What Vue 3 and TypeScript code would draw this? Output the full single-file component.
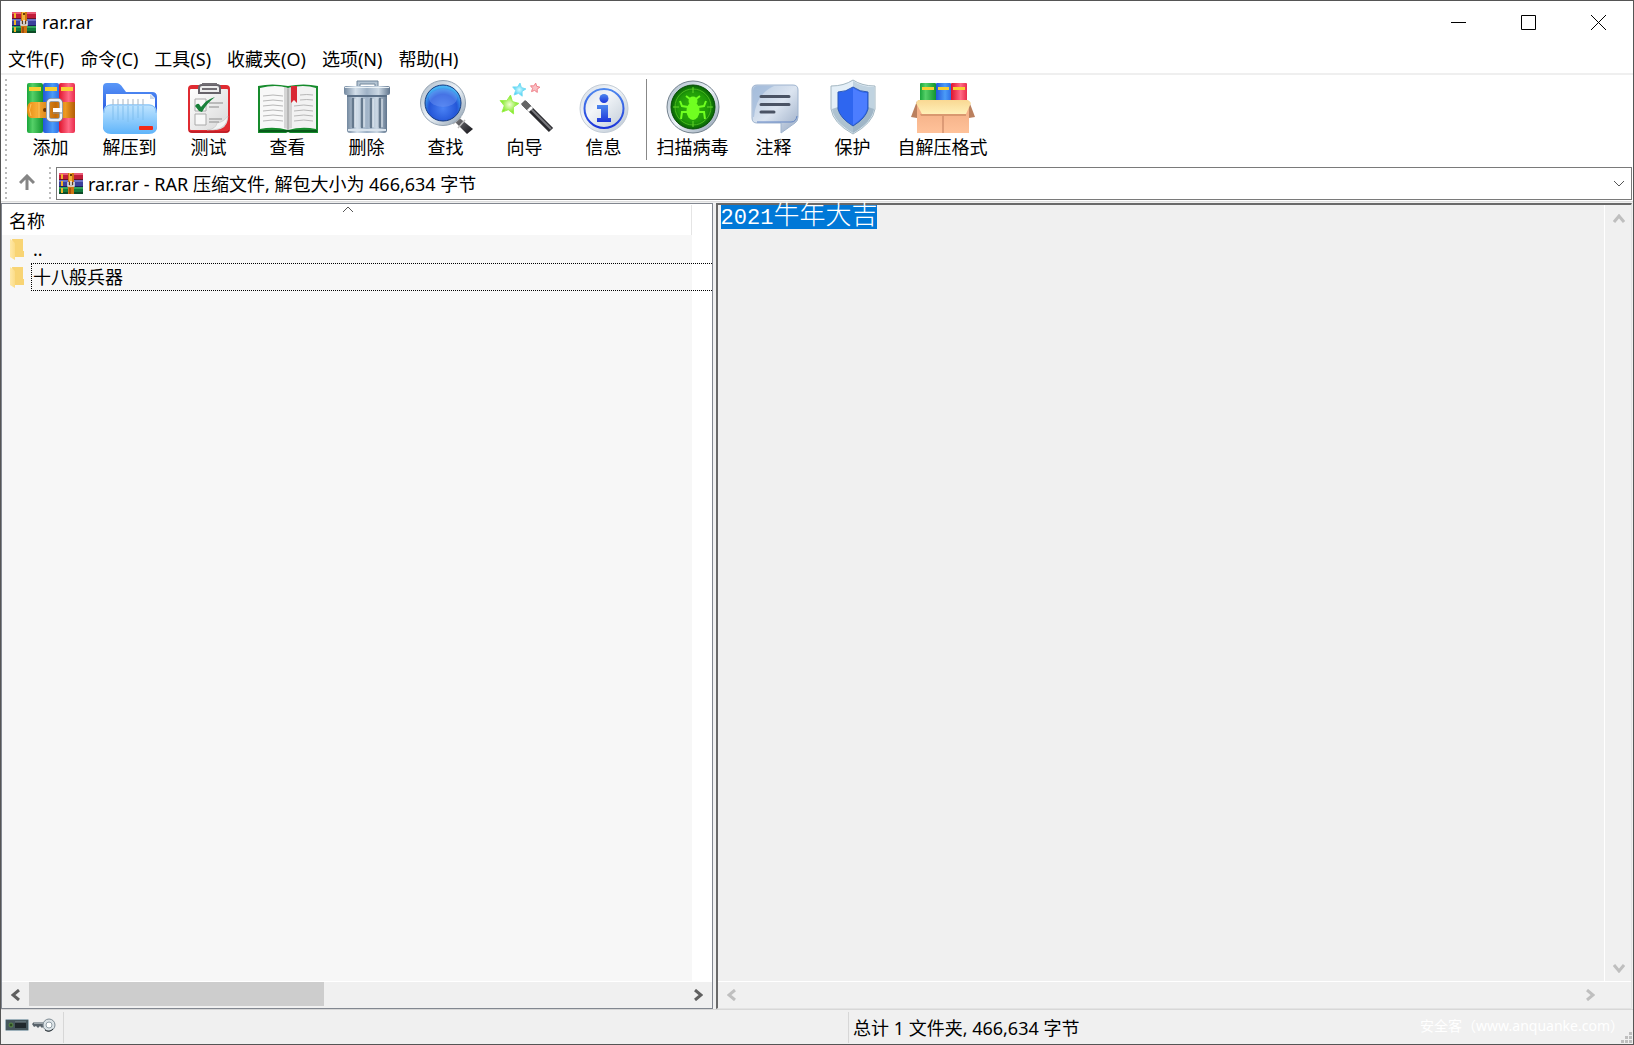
<script setup lang="ts">
import { ref } from 'vue'

interface Tool {
  id: string
  label: string
  wide?: 'scan' | 'sfx'
}

const menus: string[] = ['文件(F)', '命令(C)', '工具(S)', '收藏夹(O)', '选项(N)', '帮助(H)']

const archiveTools: Tool[] = [
  { id: 'add', label: '添加' },
  { id: 'extract', label: '解压到' },
  { id: 'test', label: '测试' },
  { id: 'view', label: '查看' },
  { id: 'delete', label: '删除' },
  { id: 'find', label: '查找' },
  { id: 'wizard', label: '向导' },
  { id: 'info', label: '信息' },
]
const extraTools: Tool[] = [
  { id: 'scan', label: '扫描病毒', wide: 'scan' },
  { id: 'comment', label: '注释' },
  { id: 'protect', label: '保护' },
  { id: 'sfx', label: '自解压格式', wide: 'sfx' },
]
const toolGroups: Tool[][] = [archiveTools, extraTools]

const entries: string[] = ['..', '十八般兵器']
const focused = ref(1)
const location = ref('rar.rar - RAR 压缩文件, 解包大小为 466,634 字节')

const star = (cx: number, cy: number, r: number): string =>
  Array.from({ length: 10 }, (_, i) => {
    const a = -Math.PI / 2 + 0.15 + (i * Math.PI) / 5
    const d = i % 2 ? r * 0.48 : r
    return `${(cx + d * Math.cos(a)).toFixed(1)},${(cy + d * Math.sin(a)).toFixed(1)}`
  }).join(' ')
</script>

<template>
  <div class="window">
    <svg class="defs" width="0" height="0" aria-hidden="true">
      <defs>
        <linearGradient id="gGreen"><stop offset="0" stop-color="#19a53a" /><stop offset=".35" stop-color="#55d068" /><stop offset="1" stop-color="#12942f" /></linearGradient>
        <linearGradient id="gBlue"><stop offset="0" stop-color="#2357d8" /><stop offset=".6" stop-color="#4b9cf8" /><stop offset="1" stop-color="#2e6fe6" /></linearGradient>
        <linearGradient id="gRed"><stop offset="0" stop-color="#e0142c" /><stop offset=".6" stop-color="#ff6a86" /><stop offset="1" stop-color="#e92c4b" /></linearGradient>
        <linearGradient id="gBelt" x2="1"><stop offset="0" stop-color="#e88a12" /><stop offset=".2" stop-color="#f7ac35" /><stop offset=".6" stop-color="#c26a08" /><stop offset=".8" stop-color="#ee9a22" /><stop offset="1" stop-color="#b35c06" /></linearGradient>
        <linearGradient id="gFolder" x2="0" y2="1"><stop offset="0" stop-color="#c3e6ff" /><stop offset="1" stop-color="#5fb4fa" /></linearGradient>
        <linearGradient id="gBack" x2="0" y2="1"><stop offset="0" stop-color="#5a98f8" /><stop offset=".5" stop-color="#2f62e4" /><stop offset="1" stop-color="#3f8cf4" /></linearGradient>
        <linearGradient id="gPaper" x2="1" y2="1"><stop offset="0" stop-color="#ffffff" /><stop offset="1" stop-color="#d8d8d8" /></linearGradient>
        <linearGradient id="gTrash"><stop offset="0" stop-color="#73889f" /><stop offset=".25" stop-color="#d3dfea" /><stop offset=".5" stop-color="#9fb2c6" /><stop offset=".75" stop-color="#cbd8e4" /><stop offset="1" stop-color="#60758d" /></linearGradient>
        <radialGradient id="gLens" cx=".5" cy=".65" r=".6"><stop offset="0" stop-color="#4a82f4" /><stop offset=".65" stop-color="#2456d8" /><stop offset="1" stop-color="#49b5f4" /></radialGradient>
        <linearGradient id="gRim" x2="1" y2="1"><stop offset="0" stop-color="#a8b7c6" /><stop offset=".5" stop-color="#eef4f9" /><stop offset="1" stop-color="#8698aa" /></linearGradient>
        <linearGradient id="gDark" x2="1" y2="1"><stop offset="0" stop-color="#8c8c90" /><stop offset="1" stop-color="#101014" /></linearGradient>
        <linearGradient id="gDisc" x2="1" y2="1"><stop offset="0" stop-color="#d2dae4" /><stop offset=".4" stop-color="#f3f6f9" /><stop offset="1" stop-color="#b9c5d2" /></linearGradient>
        <linearGradient id="gInfo" x2="0" y2="1"><stop offset="0" stop-color="#4e88ee" /><stop offset="1" stop-color="#1c36da" /></linearGradient>
        <radialGradient id="gRadar"><stop offset="0" stop-color="#38b80c" /><stop offset=".7" stop-color="#1f9a08" /><stop offset="1" stop-color="#086006" /></radialGradient>
        <linearGradient id="gBubble" x2="1" y2="1"><stop offset="0" stop-color="#b8cbe2" /><stop offset=".5" stop-color="#dbe4f0" /><stop offset="1" stop-color="#98aac4" /></linearGradient>
        <radialGradient id="gStarG"><stop offset="0" stop-color="#f0ffd0" /><stop offset="1" stop-color="#74e414" /></radialGradient>
        <radialGradient id="gStarC"><stop offset="0" stop-color="#d5fbff" /><stop offset="1" stop-color="#3bcdf5" /></radialGradient>
        <linearGradient id="gCarton" x2="0" y2="1"><stop offset="0" stop-color="#f0aa80" /><stop offset="1" stop-color="#ffc29a" /></linearGradient>
        <linearGradient id="gFlap" x2="0" y2="1"><stop offset="0" stop-color="#f9d893" /><stop offset="1" stop-color="#fff0b8" /></linearGradient>
        <linearGradient id="gYellow"><stop offset="0" stop-color="#ffe9a8" /><stop offset="1" stop-color="#fbdc88" /></linearGradient>
        <symbol id="rarIcon" viewBox="0 0 24 21">
          <rect width="24" height="7" fill="#c01c3a" /><rect width="24" height="2" fill="#e85a76" /><rect y="6" width="24" height="1" fill="#6a1226" />
          <rect y="7" width="24" height="7" fill="#3c409c" /><rect y="7" width="24" height="2" fill="#6a70c4" /><rect y="13" width="24" height="1" fill="#1c2060" />
          <rect y="14" width="24" height="7" fill="#127a3c" /><rect y="14" width="24" height="2" fill="#34a45c" /><rect y="19" width="24" height="2" fill="#0c4c26" />
          <path d="M2 1h2v5h-2zM2 8h2v5h-2zM2 15h2v5h-2z" fill="#f0b428" />
          <rect x="9" width="6" height="21" fill="#cf7412" /><rect x="10" width="3" height="8" fill="#f2b23c" />
          <path d="M11 1h2v2h-2z" fill="#6a3a08" />
          <path d="M9 9v4h6V9" fill="#5a3a20" stroke="#e8e8e8" stroke-width="1.500" /><path d="M12 8v4" stroke="#fff" stroke-width="1.500" />
          <rect x="10" y="15" width="2" height="6" fill="#a4500c" />
        </symbol>
      </defs>
    </svg>

    <header class="titlebar">
      <svg class="app-icon" viewBox="0 0 24 21"><use href="#rarIcon" /></svg>
      <h1>rar.rar</h1>
      <div class="controls">
        <button type="button" aria-label="最小化"><svg viewBox="0 0 15 15"><path d="M0 7.500h15" /></svg></button>
        <button type="button" aria-label="最大化"><svg viewBox="0 0 15 15"><path d="M.5.5h14v14H.5z" /></svg></button>
        <button type="button" aria-label="关闭"><svg viewBox="0 0 15 15"><path d="M0 0l15 15M15 0L0 15" /></svg></button>
      </div>
    </header>

    <nav class="menubar">
      <button v-for="m in menus" :key="m" type="button">{{ m }}</button>
    </nav>

    <div class="toolbar">
      <i class="grip"></i>
      <div v-for="(group, g) in toolGroups" :key="g" class="tool-group">
        <button v-for="t in group" :key="t.id" type="button" class="tool" :class="t.wide">
          <svg viewBox="0 0 64 56" aria-hidden="true">
            <g v-if="t.id === 'add'">
              <rect x="8" y="4" width="16" height="50" rx="2" fill="url(#gGreen)" />
              <rect x="24" y="4" width="16" height="50" rx="2" fill="url(#gBlue)" />
              <rect x="40" y="4" width="16" height="50" rx="2" fill="url(#gRed)" />
              <path d="M10 8h12v4H10zM26 8h12v4H26zM42 8h12v4H42z" fill="#f8d032" />
              <path d="M56 23v16H12q-4-1-4-8t4-8z" fill="url(#gBelt)" />
              <path d="M20 23v16M12 25q-3 6 0 12" stroke="#ffc65c" fill="none" />
              <circle cx="26" cy="31" r="2" fill="#6b3403" />
              <rect x="29" y="21" width="13" height="20" rx="3" fill="none" stroke="#7a8590" stroke-width="4" />
              <rect x="29" y="21" width="13" height="20" rx="3" fill="none" stroke="#eef2f6" stroke-width="2.500" />
              <path d="M34 31h9" stroke="#fff" stroke-width="4" /><path d="M34 34h9" stroke="#87929c" />
            </g>
            <g v-else-if="t.id === 'extract'">
              <path d="M5 8q0-4 4-4h9q4 0 7 5l3 4h26q5 0 5 5v29q0 7-7 7H12q-7 0-7-7z" fill="url(#gBack)" />
              <path d="M8 15h45l4 4v20H8z" fill="#fff" /><path d="M52 15v5h5z" fill="#ccd8e8" />
              <path d="M5 34q0-8 8-9h38q8 1 8 9v13q0 8-8 8H13q-8 0-8-8z" fill="url(#gFolder)" />
              <path d="M6 34q0-8 7-8h38q7 0 7 8" fill="none" stroke="#83bff5" />
              <path d="M15 20v6M20 20v6M25 20v6M30 20v6M35 20v6M40 20v6M45 20v6" stroke="#a9b5c2" />
              <path d="M15 27v14M20 27v14M25 27v14M30 27v16M35 27v14M40 27v12M45 27v14" stroke="#80bfee" />
              <rect x="41" y="47" width="14" height="4" rx="1" fill="#f22a18" />
            </g>
            <g v-else-if="t.id === 'test'">
              <rect x="11" y="6" width="42" height="48" rx="4" fill="#e02b31" /><path d="M12 52q1 1 4 1h33q3 0 3-2" stroke="#a91620" fill="none" />
              <path d="M13 11q0-1 1-1h36q1 0 1 1v28q-1 11-12 12H14q-1 0-1-1z" fill="url(#gPaper)" /><path d="M51 37Q50 50 36 51h-6q9-1 10-7 7-1 11-7z" fill="#f4f4f4" stroke="#bbb" stroke-width=".5" />
              <path d="M22 9q0-3 3-3h15q3 0 3 3v5H22z" fill="#eee" stroke="#67636a" stroke-width="2" /><path d="M25 5h15M25 10h15" stroke="#736f75" stroke-width="2" />
              <path d="M18 20h11v12H18zM18 35h11v11H18z" fill="#f8f8f8" stroke="#aaa" />
              <path d="M32 24h14M32 28h10M32 40h13M32 43h10" stroke="#aaa" stroke-width="1.500" />
              <path d="M18 27q2-3 4-2l2 3Q30 20 38 18 30 24 25 33l-3-1z" fill="#18813a" />
            </g>
            <g v-else-if="t.id === 'view'">
              <path d="M2 7q14-3 30 0 16-3 30 0v47H34l-2-1-2 1H2z" fill="#168b2c" /><path d="M3 51h58v2H3z" fill="#07591a" />
              <path d="M4 9q16-4 28 0v42Q18 47 4 50z" fill="#f8f8f8" /><path d="M32 9q16-4 28 0v41q-14-3-28 1z" fill="#f2f2f2" />
              <path d="M28 8q3 0 4 2 1-2 4-2v41q-3 0-4 2-1-2-4-2z" fill="#c2c2c2" opacity=".65" /><path d="M32 9v42" stroke="#999" />
              <path d="M7 17q10-2 20 0M7 22q10-2 20 0M7 27q10-2 20 0M7 32q10-2 20 0M7 37q10-2 20 0M7 42q10-2 20 0M44 16q7-1 13 0M44 21q7-1 13 0M38 27q10-2 19 0M38 32q10-2 19 0M38 37q10-2 19 0M38 42q10-2 19 0" fill="none" stroke="#b7b7b7" />
              <path d="M35 7h6v17l-3-3-3 3z" fill="#d92934" />
            </g>
            <g v-else-if="t.id === 'delete'">
              <path d="M22 8V2h21v6h-3V5H25v3z" fill="#b3c3d2" stroke="#71869b" />
              <path d="M12 15h40v36q0 3-3 3H15q-3 0-3-3z" fill="url(#gTrash)" />
              <path d="M18 20v28M27 20v28M36 20v28M45 20v28" stroke="#65798d" stroke-width="2.500" stroke-linecap="round" /><path d="M20 20v28M29 20v28M38 20v28M47 20v28" stroke="#eaf1f7" />
              <path d="M13 51h38" stroke="#dae4ed" stroke-width="2" /><path d="M12 17h40" stroke="#5c7188" stroke-width="2" />
              <rect x="9" y="7" width="46" height="9" rx="2" fill="url(#gTrash)" /><path d="M10 8.500h44" stroke="#eaf1f6" />
            </g>
            <g v-else-if="t.id === 'find'">
              <path d="M43 37l16 13-6 5-14-14z" fill="url(#gDark)" /><path d="M47 38l-8 7M51 41l-7 8" stroke="#bbb" stroke-width="1.500" />
              <circle cx="29" cy="24" r="22.500" fill="url(#gRim)" stroke="#94a3b2" /><circle cx="29" cy="24" r="18" fill="url(#gLens)" stroke="#163a80" />
              <ellipse cx="29" cy="19" rx="14" ry="9" fill="#7196f5" opacity=".45" />
            </g>
            <g v-else-if="t.id === 'wizard'">
              <polygon :points="star(16, 26, 10)" fill="url(#gStarG)" stroke="#9af04b" /><polygon :points="star(26, 11, 7)" fill="url(#gStarC)" stroke="#78dcf4" /><polygon :points="star(42, 9, 5)" fill="#fac0c4" stroke="#f08089" />
              <path d="M31 24l27 27" stroke="#29292d" stroke-width="6" /><path d="M32 24l26 26" stroke="#7a7a7e" stroke-width="2" /><path d="M30 23l6 6" stroke="#666" stroke-width="6" /><path d="M36 29l2 2" stroke="#fff" stroke-width="6" />
            </g>
            <g v-else-if="t.id === 'info'">
              <circle cx="32" cy="29.500" r="24" fill="url(#gDisc)" stroke="#c3ccd6" /><circle cx="32" cy="29.500" r="19.500" fill="none" stroke="url(#gInfo)" stroke-width="2" />
              <circle cx="32" cy="19.500" r="4.500" fill="url(#gInfo)" /><path d="M25 26h11v13h3v4H25v-4h4v-9h-4z" fill="url(#gInfo)" />
            </g>
            <g v-else-if="t.id === 'scan'">
              <circle cx="32" cy="28" r="26" fill="url(#gRim)" stroke="#74828e" /><circle cx="32" cy="28" r="22" fill="url(#gRadar)" stroke="#064c05" />
              <circle cx="32" cy="28" r="18" fill="none" stroke="#48b81e" /><path d="M32 8v6M32 42v6M12 28h6M46 28h6" stroke="#62d72b" />
              <ellipse cx="32" cy="32" rx="6.500" ry="9" fill="#70ff20" /><circle cx="32" cy="22" r="4.500" fill="#70ff20" />
              <path d="M29 20l-4-3M35 20l4-3M27 28l-6-1-2-5M37 28l6-1 2-5M26 33h-5l-1 7M38 33h5l1 7" stroke="#70ff20" stroke-width="2" fill="none" />
            </g>
            <g v-else-if="t.id === 'comment'">
              <path d="M15 6h36q5 0 5 5v27q0 4-3 6L39 54V44H15q-5 0-5-5V11q0-5 5-5z" fill="url(#gBubble)" stroke="#9fb4cf" />
              <path d="M11 38V12q0-5 5-5h16Q14 15 12 38z" fill="#8faed4" opacity=".5" /><path d="M15 43h34q5 0 6-6" stroke="#6486c4" stroke-width="1" fill="none" />
              <path d="M19 17.500h28M19 25.500h28M19 33h13" stroke="#4a5364" stroke-width="3" stroke-linecap="round" />
            </g>
            <g v-else-if="t.id === 'protect'">
              <path d="M32 1q9 6 22 6v23Q52 44 32 55 12 44 10 30V7q13 0 22-6z" fill="#e4eff7" stroke="#a3b7c2" /><path d="M32 2q9 6 21 6v22q-2 13-21 24z" fill="#c0d3e0" /><path d="M11 30l6-2 15 16 15-16 6 2Q51 43 32 54 13 43 11 30z" fill="#8aa4b5" opacity=".6" />
              <path d="M32 8q7 5 15 5v17q-2 9-15 17-13-8-15-17V13q8 0 15-5z" fill="#2e66f0" stroke="#2a58b8" /><path d="M32 9q7 5 14 5v16q-2 8-14 16z" fill="#4c7dff" />
            </g>
            <g v-else>
              <rect x="9" y="4" width="16" height="22" rx="1" fill="url(#gGreen)" /><rect x="25" y="4" width="15" height="22" rx="1" fill="url(#gBlue)" /><rect x="40" y="4" width="16" height="22" rx="1" fill="url(#gRed)" />
              <path d="M11 8h12v3H11zM27 8h11v3H27zM42 8h12v3H42z" fill="#f8d032" />
              <path d="M6 22L0 38l6 1zM58 22l6 16-6 1z" fill="#bb805e" /><path d="M6 23h52v31H6z" fill="url(#gCarton)" /><path d="M32 35v19" stroke="#bf7b5b" />
              <path d="M9 35h46v2H10z" fill="#d99870" /><path d="M7 21h50l3 3-5 11H11L5 24z" fill="url(#gFlap)" />
            </g>
          </svg>
          <span>{{ t.label }}</span>
        </button>
      </div>
    </div>

    <div class="addressbar">
      <i class="grip"></i>
      <button type="button" class="up" aria-label="向上"><svg viewBox="0 0 16 16"><path d="M8 16V2M1 9l7-7 7 7" /></svg></button>
      <i class="grip"></i>
      <label class="combo">
        <svg class="app-icon" viewBox="0 0 24 21"><use href="#rarIcon" /></svg>
        <select v-model="location" aria-label="位置"><option>{{ location }}</option></select>
        <svg class="chevron" viewBox="0 0 12 7"><path d="M1 1l5 5 5-5" /></svg>
      </label>
    </div>

    <main class="panes">
      <section class="files">
        <div class="list">
          <table>
            <thead>
              <tr><th scope="col">名称<svg class="sort" viewBox="0 0 12 7"><path d="M1 6l5-5 5 5" /></svg></th></tr>
            </thead>
            <tbody>
              <tr v-for="(name, i) in entries" :key="name" @click="focused = i">
                <td>
                  <div class="row">
                    <svg class="folder" viewBox="0 0 14 21"><path d="M2 0h11v12h1v6H4z" fill="#f8d474" /><path d="M0 0l4 3q1 1 1 2v16l-5-3z" fill="url(#gYellow)" /></svg>
                    <span class="name" :class="{ focus: focused === i }">{{ name }}</span>
                  </div>
                </td>
              </tr>
            </tbody>
          </table>
        </div>
        <div class="hscroll">
          <button type="button" aria-label="向左"><svg viewBox="0 0 9 12"><path d="M8 1L2 6l6 5" /></svg></button>
          <div class="track"><div class="thumb"></div></div>
          <button type="button" aria-label="向右"><svg viewBox="0 0 9 12"><path d="M1 1l6 5-6 5" /></svg></button>
        </div>
      </section>

      <section class="comment">
        <p class="note"><mark><span class="digits">2021</span>牛年大吉</mark></p>
        <div class="vscroll">
          <button type="button" disabled aria-label="上"><svg viewBox="0 0 12 9"><path d="M1 8l5-6 5 6" /></svg></button>
          <button type="button" disabled aria-label="下"><svg viewBox="0 0 12 9"><path d="M1 1l5 6 5-6" /></svg></button>
        </div>
        <div class="hscroll off">
          <button type="button" disabled aria-label="左"><svg viewBox="0 0 9 12"><path d="M8 1L2 6l6 5" /></svg></button>
          <button type="button" disabled aria-label="右"><svg viewBox="0 0 9 12"><path d="M1 1l6 5-6 5" /></svg></button>
        </div>
      </section>
    </main>

    <footer class="statusbar">
      <div class="status-icons">
        <svg width="24" height="12" viewBox="0 0 24 12"><rect x=".5" y=".5" width="23" height="11" rx="1" fill="#46565c" stroke="#9cb0ba" /><circle cx="6" cy="6" r="2" fill="#2c4a20" stroke="#5a8a48" /><rect x="10" y="3" width="11" height="6" fill="#20282c" /><path d="M10 3h11" stroke="#7b8a90" /></svg>
        <svg width="24" height="16" viewBox="0 0 24 16"><path d="M0 7l2-2h11v5h-2l-1 1-2-2-2 2-2-2-2 1z" fill="#59636b" /><path d="M2 6h10" stroke="#dfe5e8" /><circle cx="17" cy="8" r="6" fill="#dce3e7" stroke="#7d8a92" /><circle cx="17" cy="8" r="3" fill="#fff" stroke="#93a1a8" /><path d="M13 13q4 3 8-1" stroke="#2a3136" fill="none" /></svg>
      </div>
      <div class="status-cell"></div>
      <div class="status-cell">总计 1 文件夹, 466,634 字节</div>
      <span class="watermark">安全客（www.anquanke.com）</span>
      <svg class="resize" viewBox="0 0 11 11"><path d="M8 0h3v3H8zM4 4h3v3H4zM8 4h3v3H8zM0 8h3v3H0zM4 8h3v3H4zM8 8h3v3H8z" /></svg>
    </footer>
  </div>
</template>

<style>
body {
  margin: 0;
}
</style>

<style scoped>
* {
  box-sizing: border-box;
}
.window {
  display: flex;
  flex-direction: column;
  min-height: 100vh;
  border: 1px solid #555;
  background: #fff;
  color: #000;
  font: 18px/24px "Noto Sans", "Noto Sans CJK SC", sans-serif;
}
.defs {
  position: absolute;
}
svg {
  display: block;
  flex: none;
}
button {
  margin: 0;
  padding: 0;
  border: 0;
  background: none;
  color: inherit;
  font: inherit;
}
.titlebar {
  display: flex;
  align-items: center;
  height: 42px;
  padding-left: 11px;
  gap: 6px;
}
.app-icon {
  width: 24px;
  height: 21px;
}
h1 {
  margin: 0;
  font-size: 18px;
  font-weight: 400;
}
.controls {
  display: flex;
  height: 100%;
  margin-left: auto;
}
.controls button {
  display: flex;
  align-items: center;
  justify-content: center;
  width: 70px;
}
.controls svg {
  width: 15px;
  height: 15px;
  fill: none;
  stroke: #000;
}
.menubar {
  display: flex;
  gap: 16px;
  height: 32px;
  padding: 4px 7px;
  border-bottom: 2px solid #efefef;
}
.toolbar {
  display: flex;
  height: 89px;
  padding: 4px 0 0 4px;
}
.grip {
  width: 2px;
  background: repeating-linear-gradient(#bbb 0 2px, #fff 2px 5px);
}
.toolbar .grip {
  margin-right: 4px;
}
.tool-group {
  display: flex;
  height: 81px;
}
.tool-group + .tool-group {
  margin-left: 3px;
  padding-left: 4px;
  border-left: 1px solid #888;
}
.tool {
  display: flex;
  flex-direction: column;
  align-items: center;
  width: 79px;
}
.tool.scan {
  width: 83px;
}
.tool.sfx {
  width: 101px;
}
.tool svg {
  width: 64px;
  height: 56px;
}
.addressbar {
  display: flex;
  height: 38px;
  padding: 3px 1px 0 4px;
  border-bottom: 1px solid #ddd;
}
.up {
  display: flex;
  align-items: center;
  justify-content: center;
  width: 42px;
  height: 30px;
  padding-right: 2px;
}
.up svg {
  width: 16px;
  height: 16px;
  fill: none;
  stroke: #858585;
  stroke-width: 3;
}
.combo {
  display: flex;
  flex: 1;
  align-items: center;
  height: 33px;
  margin-left: 5px;
  padding: 0 6px 0 2px;
  border: 1px solid #7a7a7a;
}
.combo select {
  flex: 1;
  padding: 0 5px;
  border: 0;
  background: none;
  color: inherit;
  font: inherit;
  appearance: none;
}
.chevron,
.sort {
  width: 12px;
  height: 7px;
  fill: none;
  stroke: #555;
}
.panes {
  display: grid;
  flex: 1;
  grid-template-columns: minmax(0, 712fr) minmax(0, 917fr);
  gap: 3px;
  padding: 1px 1px 0 0;
  background: #f0f0f0;
}
.files {
  display: flex;
  flex-direction: column;
  border: 1px solid #828790;
}
.list {
  flex: 1;
  background: linear-gradient(to right, #f7f7f7 calc(100% - 20px), #fff 0);
}
table {
  width: 100%;
  border-collapse: collapse;
  background: linear-gradient(#fff 31px, transparent 0);
}
th {
  position: relative;
  height: 31px;
  padding: 2px 0 0 7px;
  font-weight: 400;
  text-align: left;
}
th::after {
  content: "";
  position: absolute;
  top: 1px;
  right: 20px;
  bottom: 0;
  border-right: 1px solid #e5e5e5;
}
.sort {
  position: absolute;
  top: 2px;
  left: calc(50% - 15px);
}
td {
  padding: 0;
}
.row {
  display: flex;
  align-items: center;
  height: 28px;
  padding-left: 8px;
}
.folder {
  width: 14px;
  height: 21px;
  margin-right: 7px;
}
.name {
  flex: 1;
  height: 28px;
  padding-left: 1px;
  border: 1px dotted transparent;
  line-height: 26px;
}
.name.focus {
  border-color: #000;
  border-right: 0;
}
.hscroll {
  display: flex;
  height: 27px;
  padding-bottom: 1px;
  border-top: 1px solid #fff;
  background: #f0f0f0;
}
.hscroll button,
.vscroll button {
  display: flex;
  align-items: center;
  justify-content: center;
  width: 27px;
  height: 26px;
}
.hscroll svg {
  width: 9px;
  height: 12px;
}
.vscroll svg {
  width: 12px;
  height: 9px;
}
.hscroll svg,
.vscroll svg {
  fill: none;
  stroke: #606060;
  stroke-width: 3;
}
button:disabled svg {
  stroke: #bfbfbf;
}
.track {
  flex: 1;
}
.thumb {
  width: 45%;
  height: 24px;
  background: #cdcdcd;
}
.comment {
  display: grid;
  grid-template: minmax(0, 1fr) 27px / minmax(0, 1fr) 27px;
  border: 1px solid #e3e3e3;
  border-top: 2px solid #696969;
  border-left: 2px solid #696969;
  background: #f0f0f0;
}
.note {
  margin: 0;
  padding-left: 3px;
  font: 300 26px/24px "Liberation Mono", "Noto Sans CJK SC", monospace;
}
mark {
  display: inline-block;
  height: 24px;
  background: #0078d7;
  color: #fff;
}
.digits {
  font-size: 22px;
}
.vscroll {
  display: flex;
  flex-direction: column;
  justify-content: space-between;
  border-left: 1px solid #fff;
}
.hscroll.off {
  grid-column: 1 / 3;
  justify-content: space-between;
  padding-right: 27px;
}
.statusbar {
  position: relative;
  display: flex;
  height: 35px;
  padding: 2px 0 1px;
  border-top: 1px solid #d7d7d7;
  background: #f0f0f0;
}
.status-icons {
  display: flex;
  gap: 3px;
  width: 62px;
  height: 26px;
  padding-left: 4px;
  align-items: center;
}
.status-cell {
  flex: 1;
  padding: 4px 0 0 4px;
  border-left: 1px solid #d7d7d7;
}
.watermark {
  position: absolute;
  right: 9px;
  bottom: 6px;
  color: #fff;
  font-size: 14px;
}
.resize {
  position: absolute;
  right: 1px;
  bottom: 1px;
  width: 11px;
  height: 11px;
  fill: #bfbfbf;
}
</style>
